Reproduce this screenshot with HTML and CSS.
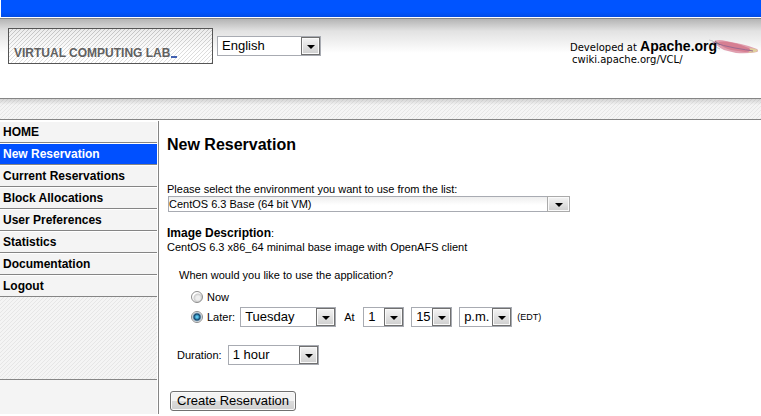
FILE: index.html
```html
<!DOCTYPE html>
<html lang="en">
<head>
<meta charset="utf-8">
<title>New Reservation - Virtual Computing Lab</title>
<link rel="stylesheet" href="styles.css">
</head>
<body>
<div class="topbar"></div>
<header class="header">
  <div class="logo">VIRTUAL COMPUTING LAB<span class="cursor"></span></div>
  <span class="select lang"><select aria-label="Language"><option>English</option></select></span>
  <div class="credit">
    <svg class="feather" viewBox="0 0 50 16" aria-hidden="true">
      <path d="M0 1 L4 2 L3 4 L8 5 L7 8 L11 10" fill="none" stroke="#c4c4c8" stroke-width="1"/>
      <path d="M5 2 Q10 0 17 2 L32 5 Q41 7 48 10 Q50 12 48 13 Q38 15 27 14 L15 11 Q8 8 5 2Z" fill="#e0a0b0"/>
      <path d="M9 3 Q18 1 32 6 L42 10 Q43 13 36 13 L22 11 Q12 8 9 3Z" fill="#d67f92"/>
      <path d="M40 9 Q45 9 49 11 L47 13 L39 14 Q43 11 40 9Z" fill="#dfcf9c"/>
      <path d="M4 3 Q14 7 26 9 T44 12" fill="none" stroke="#9b6a90" stroke-width="1"/>
      <path d="M6 2 L11 6" stroke="#777" stroke-width="1"/>
    </svg>
    <div class="credit-line">Developed at <a class="apache" href="#">Apache.org</a></div>
    <a class="wiki" href="#">cwiki.apache.org/VCL/</a>
  </div>
</header>
<div class="strip"></div>
<div class="columns">
  <nav class="sidebar">
    <ul class="menu">
      <li><a href="#">HOME</a></li>
      <li><a class="active" href="#">New Reservation</a></li>
      <li><a href="#">Current Reservations</a></li>
      <li><a href="#">Block Allocations</a></li>
      <li><a href="#">User Preferences</a></li>
      <li><a href="#">Statistics</a></li>
      <li><a href="#">Documentation</a></li>
      <li><a href="#">Logout</a></li>
    </ul>
    <div class="filler"></div>
    <div class="foot"></div>
  </nav>
  <main class="content">
    <h1>New Reservation</h1>
    <label class="block" for="env">Please select the environment you want to use from the list:</label>
    <span class="select env"><select id="env"><option>CentOS 6.3 Base (64 bit VM)</option></select></span>
    <div class="description"><strong>Image Description</strong>:<br>CentOS 6.3 x86_64 minimal base image with OpenAFS client</div>
    <form class="when">
      <p>When would you like to use the application?</p>
      <div class="choice now"><input type="radio" name="time" id="now"><label for="now">Now</label></div>
      <div class="choice later">
        <input type="radio" name="time" id="later" checked><label for="later">Later:</label>
        <span class="select day"><select aria-label="Day"><option>Tuesday</option></select></span>
        <span class="at">At</span>
        <span class="select hour"><select aria-label="Hour"><option>1</option></select></span>
        <span class="select minute"><select aria-label="Minute"><option>15</option></select></span>
        <span class="select ampm"><select aria-label="a.m. or p.m."><option>p.m.</option></select></span>
        <span class="zone">(EDT)</span>
      </div>
      <div class="duration"><label for="duration">Duration:</label>
        <span class="select length"><select id="duration"><option>1 hour</option></select></span>
      </div>
      <button class="create" type="button">Create Reservation</button>
    </form>
  </main>
</div>
</body>
</html>
```
FILE: styles.css
```css
* { box-sizing: border-box; }

body {
  margin: 0;
  background: #fff;
  color: #000;
  font: 11px/14px "Liberation Sans", Arial, sans-serif;
}

a { color: inherit; text-decoration: none; }

.topbar {
  height: 17px;
  margin-left: 1px;
  background: linear-gradient(#0054ff 70%, #004be6);
}

.header {
  display: flex;
  align-items: flex-start;
  height: 81px;
  margin-top: 1px;
  padding: 9px 0 0 8px;
  border-top: 1px solid #858585;
  border-bottom: 1px solid #858585;
  background: linear-gradient(#b4b4b4, #e2e2e2 12px, #fff 34px);
}

.logo {
  display: flex;
  align-items: flex-end;
  width: 205px;
  height: 36px;
  padding: 0 0 1px 5px;
  border: 1px solid #555;
  background: linear-gradient(135deg, #fff6 38%, #0002 38% 62%, #fff6 62%) 0 0 / 4px 4px;
  color: #606060;
  font: bold 12px/18px "Liberation Sans", Arial, sans-serif;
}

.cursor {
  width: 6px;
  height: 2px;
  margin: 0 0 4px 1px;
  background: #4060b0;
}

.select {
  position: relative;
  display: block;
  height: 20px;
}

.select select {
  display: block;
  width: 100%;
  height: 100%;
  margin: 0;
  padding: 0 18px 0 4px;
  appearance: none;
  border: 1px solid #a8abb2;
  border-radius: 0;
  background: #fff;
  color: #000;
  font: 13px/18px "Liberation Sans", Arial, sans-serif;
}

.select::before {
  content: "";
  position: absolute;
  top: 1px;
  right: 1px;
  bottom: 1px;
  width: 17px;
  border: 1px solid #707070;
  background: linear-gradient(#f4f4f4, #cfcfcf);
  box-shadow: inset 0 0 0 1px #fafafa;
  pointer-events: none;
}

.select::after {
  content: "";
  position: absolute;
  top: 9px;
  right: 6px;
  border: 4px solid transparent;
  border-top-color: #000;
  border-bottom: 0;
  pointer-events: none;
}

.lang { width: 104px; margin: 8px 0 0 4px; }

.credit {
  position: relative;
  width: 191px;
  margin: 10px 0 0 auto;
  font: 10px/12px "DejaVu Sans", sans-serif;
}

.credit-line { position: relative; line-height: 16px; }
.apache { font: bold 14px/16px "Liberation Sans", sans-serif; }
.wiki { display: block; padding-left: 2px; line-height: 8px; }

.feather {
  position: absolute;
  top: 1px;
  right: 2px;
  width: 50px;
  height: 16px;
}

.strip {
  height: 21px;
  border-bottom: 1px solid #858585;
  background:
    linear-gradient(#0002, #0000 6px),
    linear-gradient(135deg, #f4f4f4 38%, #e6e6e6 38% 62%, #f4f4f4 62%) 0 0 / 4px 4px;
}

.columns { display: flex; margin-top: 1px; }

.sidebar {
  display: flex;
  flex-direction: column;
  flex: none;
  width: 159px;
  padding-right: 1px;
  border-right: 1px solid #858585;
}

.menu { margin: 0; padding: 0; list-style: none; }

.menu a {
  display: block;
  height: 22px;
  padding-left: 3px;
  border-top: 1px solid #fff;
  border-bottom: 1px solid #858585;
  background: #f4f4f4;
  font-size: 12px;
  font-weight: bold;
  line-height: 20px;
}

.menu .active { background: #0050ff; color: #fff; }

.filler {
  flex: 1;
  border-bottom: 1px solid #858585;
  background: linear-gradient(135deg, #f4f4f4 38%, #e6e6e6 38% 62%, #f4f4f4 62%) 0 0 / 4px 4px;
}

.foot { height: 34px; background: #f4f4f4; }

.content { flex: 1; padding: 14px 8px 3px; }

h1 { margin: 0 0 27px; font-size: 16px; line-height: 20px; }

.block { display: block; }

.env { width: 402px; height: 16px; margin-left: 1px; }
.env select {
  padding: 0 22px 0 0;
  background: linear-gradient(#eee, #fff 8px);
  font-size: 11px;
  line-height: 14px;
}
.env::before {
  top: 0;
  right: 0;
  bottom: 0;
  width: 21px;
  border-color: #aaa;
}
.env::after { top: 7px; right: 7px; }

.description { margin-top: 14px; }
.description strong { font-size: 12px; }

.when { padding-left: 3px; }
.when p { margin: 14px 0 8px 9px; }

.choice { display: flex; align-items: center; padding-left: 21px; }
.choice input {
  width: 12px;
  height: 12px;
  margin: 0 4px 0 0;
  appearance: none;
  border: 1px solid #8c8c8c;
  border-radius: 50%;
  background: radial-gradient(circle at 60% 60%, #eee 2px, #ccc 4px, #fff 5px);
}
.choice input:checked {
  background: radial-gradient(circle, #59c6ee 0 1px, #12476f 3px, #fff 5px);
}
.now { height: 14px; }
.later { height: 20px; margin-top: 3px; }
.day { width: 96px; margin-left: 5px; }
.at { width: 27px; padding-left: 8px; }
.hour { width: 41px; }
.minute { width: 41px; margin-left: 7px; }
.ampm { width: 53px; margin-left: 7px; }
.zone { margin-left: 5px; font-size: 9px; }

.duration { display: flex; align-items: center; margin: 18px 0 26px 7px; }
.length { width: 91px; margin-left: 6px; }

.create {
  display: block;
  height: 20px;
  padding: 0 6px;
  border: 1px solid #707070;
  border-radius: 3px;
  background: linear-gradient(#f3f3f3 50%, #dcdcdc 50%, #cfcfcf);
  box-shadow: inset 0 0 0 1px #fafafa;
  color: #000;
  font: 13px/16px "Liberation Sans", Arial, sans-serif;
}
```
